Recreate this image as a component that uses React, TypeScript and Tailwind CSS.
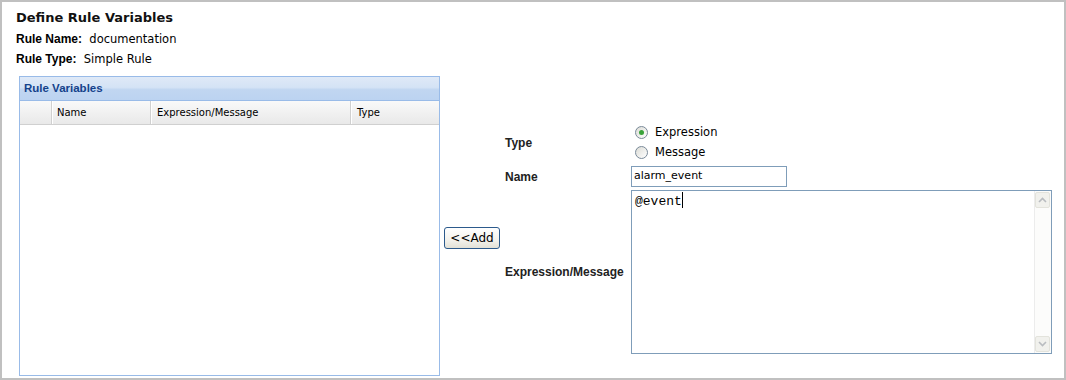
import type { ReactNode } from 'react';

const FONT = { fontFamily: '"DejaVu Sans", Verdana, sans-serif' };
const BOLD = { fontFamily: '"Liberation Sans", Arial, sans-serif' };

function Radio({ checked, label }: { checked?: boolean; label: string }) {
  return (
    <label className="flex items-center h-[20px] gap-[7px] text-[11.5px] text-black">
      <span className="w-[13px] h-[13px] rounded-full border border-[#7a8a99] bg-gradient-to-br from-[#dcdcd6] to-white flex items-center justify-center">
        {checked && <span className="w-[5px] h-[5px] rounded-full bg-[#3aa33a]" />}
      </span>
      {label}
    </label>
  );
}

function Row({ label, children, className }: { label: string; children: ReactNode; className?: string }) {
  return (
    <div className={`flex items-center ${className ?? ''}`}>
      <div className="w-[126px] shrink-0 text-[12px] font-bold text-[#222]" style={BOLD}>
        {label}
      </div>
      {children}
    </div>
  );
}

function Chevron({ up }: { up?: boolean }) {
  return (
    <svg width="9" height="6" viewBox="0 0 9 6">
      <path
        d={up ? 'M1 5 L4.5 1.5 L8 5' : 'M1 1 L4.5 4.5 L8 1'}
        fill="none"
        stroke="#b9bcc0"
        strokeWidth="1.6"
      />
    </svg>
  );
}

export default function App() {
  return (
    <div className="w-[1066px] h-[380px] border-2 border-[#c0c0c0] bg-white overflow-hidden" style={FONT}>
      <div className="pl-[14px] pt-[7px]">
        <h1 className="text-[13px] font-bold text-[#111] leading-[18px]">Define Rule Variables</h1>
        <div className="text-[11.5px] leading-[20px] text-black mt-[2px]">
          <div>
            <span className="font-bold text-[12px]" style={BOLD}>Rule Name:</span>&nbsp; documentation
          </div>
          <div>
            <span className="font-bold text-[12px]" style={BOLD}>Rule Type:</span>&nbsp; Simple Rule
          </div>
        </div>
      </div>

      <div className="flex items-start mt-[7px] pl-[17px]">
        {/* grid panel */}
        <div className="w-[421px] h-[300px] border border-[#99bbe8] flex flex-col shrink-0">
          <div className="h-[24px] flex items-center px-[4px] bg-[linear-gradient(#dfe9f7_0%,#d4e3f5_45%,#c1d6f1_55%,#bcd3f1_100%)] border-b border-[#99bbe8]">
            <span className="text-[11.5px] font-bold text-[#15428b]" style={BOLD}>Rule Variables</span>
          </div>
          <div className="flex h-[24px] bg-[linear-gradient(#f9f9f9,#e9e9e9)] border-b border-[#d0d0d0] text-[10px] text-black">
            <div className="w-[32px] border-r border-[#d0d0d0]" />
            <div className="w-[99px] border-r border-[#d0d0d0] border-l border-l-white pl-[4px] flex items-center">Name</div>
            <div className="w-[200px] border-r border-[#d0d0d0] border-l border-l-white pl-[5px] flex items-center">Expression/Message</div>
            <div className="flex-1 border-l border-l-white pl-[5px] flex items-center">Type</div>
          </div>
          <div className="flex-1 bg-white" />
        </div>

        {/* add button + form */}
        <div className="flex items-center mt-[46px]">
          <button
            type="button"
            className="ml-[4px] w-[56px] h-[22px] rounded-[3px] border border-[#2c5a8c] bg-[linear-gradient(#ffffff,#f3f2ec_60%,#e3e1d6)] text-[12px] text-black leading-none"
          >
            &lt;&lt;Add
          </button>

          <div className="ml-[5px] flex flex-col gap-[3px]">
            <Row label="Type" className="h-[41px]">
              <div className="flex flex-col ml-[4px]">
                <Radio checked label="Expression" />
                <Radio label="Message" />
              </div>
            </Row>
            <Row label="Name" className="h-[21px]">
              <div className="w-[156px] h-[21px] border border-[#7f9db9] text-[11px] pl-[2px] flex items-center text-black">
                alarm_event
              </div>
            </Row>
            <Row label="Expression/Message" className="h-[164px]">
              <div className="w-[421px] h-[164px] border border-[#7f9db9] flex">
                <div className="flex-1 pl-[3px] pt-[1px] text-[13px] leading-[17px] text-black" style={{ fontFamily: '"Liberation Mono", monospace' }}>
                  @event<span className="inline-block w-[1px] h-[16px] bg-black align-[-3px]" />
                </div>
                <div className="w-[17px] flex flex-col justify-between bg-[#fcfcfb] border-l border-[#ececec] py-[1px] pr-[1px]">
                  <div className="h-[16px] bg-[#f1f1ed] border border-[#e3e3dc] rounded-[2px] flex items-center justify-center">
                    <Chevron up />
                  </div>
                  <div className="h-[16px] bg-[#f1f1ed] border border-[#e3e3dc] rounded-[2px] flex items-center justify-center">
                    <Chevron />
                  </div>
                </div>
              </div>
            </Row>
          </div>
        </div>
      </div>
    </div>
  );
}
